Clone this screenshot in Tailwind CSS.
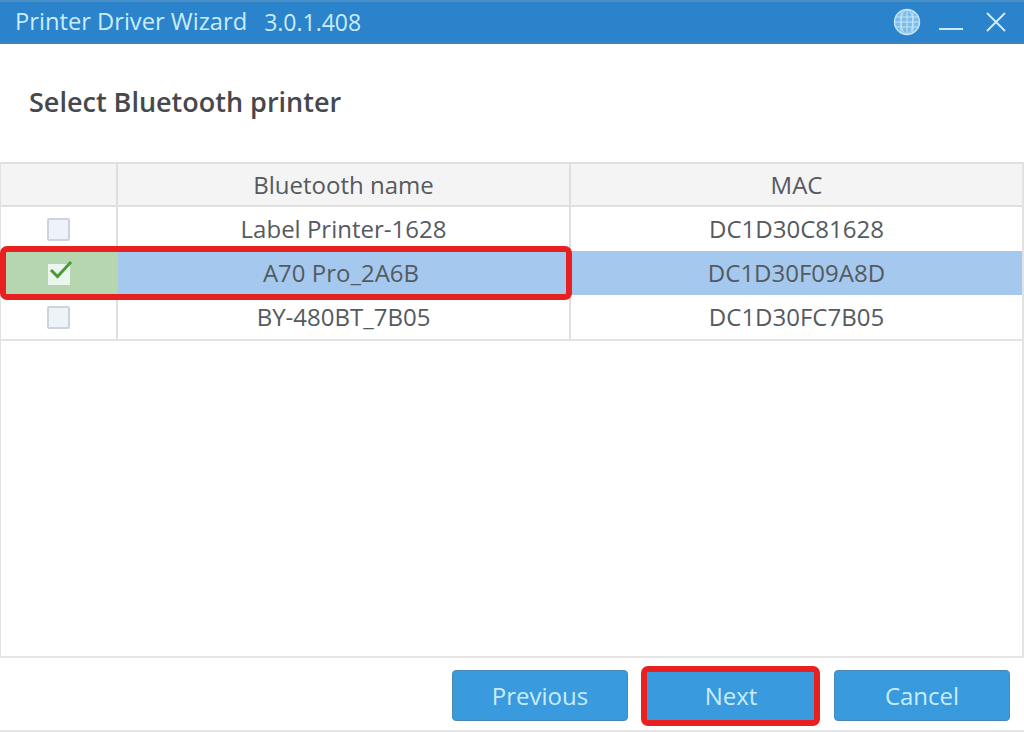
<!DOCTYPE html>
<html>
<head>
<meta charset="utf-8">
<script src="https://cdn.jsdelivr.net/npm/@tailwindcss/browser@4"></script>
</head>
<body class="m-0">
<div class="relative w-[1024px] h-[732px] overflow-hidden bg-white flex flex-col font-['Open_Sans','Noto_Sans',sans-serif] text-[#555a60]">
  <header class="h-[44px] shrink-0 bg-[#2a83cb] border-t-2 border-t-[#4a8fc6] border-b-2 border-b-[#3f86bf] flex items-center pl-[15px] text-[#c9ecfb] text-[23.7px]">
    <span>Printer Driver Wizard</span>
    <span class="ml-[17px] text-[23px]">3.0.1.408</span>
    <div class="ml-auto flex items-center pr-[18px]">
      <svg class="w-[28px] h-[28px]" viewBox="0 0 28 28" fill="#7fbce8" stroke="#c4e6f8" stroke-width="1">
        <circle cx="14" cy="14" r="12.5" stroke-width="1.4"/>
        <ellipse cx="14" cy="14" rx="6" ry="12.5" fill="none"/>
        <path d="M14 1.5V26.5M2.5 9H25.5M1.5 14H26.5M2.5 19H25.5M8 3V25M20 3V25" fill="none"/>
      </svg>
      <svg class="w-[24px] h-[4px] ml-[18px] mt-[14px]" viewBox="0 0 24 4"><path d="M0 2H24" stroke="#c9ecfb" stroke-width="2"/></svg>
      <svg class="w-[20px] h-[20px] ml-[23px]" viewBox="0 0 20 20"><path d="M1 1L19 19M19 1L1 19" stroke="#d3effc" stroke-width="1.8"/></svg>
    </div>
  </header>

  <h1 class="h-[118px] shrink-0 flex items-center pl-[29px] pb-[2px] text-[27px] font-semibold text-[#46484b]">Select Bluetooth printer</h1>

  <div class="grid grid-cols-[117px_453px_1fr] grid-rows-[45px_44px_44px_44px] text-[24px] border-l border-b-2 border-r-2 border-[#e2e2e2]">
    <div class="bg-[#f4f4f4] border-t-2 border-b-2 border-r-2 border-[#dfdfdf]"></div>
    <div class="bg-[#f4f4f4] border-t-2 border-b-2 border-r-2 border-[#dfdfdf] flex items-center justify-center">Bluetooth name</div>
    <div class="bg-[#f4f4f4] border-t-2 border-b-2 border-[#dfdfdf] flex items-center justify-center">MAC</div>

    <div class="border-r-2 border-[#dfdfdf] flex items-center justify-center"><div class="w-[23px] h-[23px] bg-[#eef3fa] border-2 border-[#ccd3dc] rounded-[2px]"></div></div>
    <div class="border-r-2 border-[#dfdfdf] flex items-center justify-center">Label Printer-1628</div>
    <div class="flex items-center justify-center">DC1D30C81628</div>

    <div class="bg-[#b5d6ae] flex items-center justify-center">
      <div class="relative w-[22px] h-[21px] bg-[#eaf6ee] mr-[1px] mt-[2px]">
        <svg class="absolute left-[1px] top-[-4px] w-[24px] h-[20px]" viewBox="0 0 24 20" fill="none"><path d="M2 10L8.5 16.5L22 2" stroke="#4a9a35" stroke-width="3"/></svg>
      </div>
    </div>
    <div class="bg-[#a5c9ee] flex items-center justify-center pr-[7px]">A70 Pro_2A6B</div>
    <div class="bg-[#a5c9ee] flex items-center justify-center">DC1D30F09A8D</div>

    <div class="border-r-2 border-[#dfdfdf] flex items-center justify-center"><div class="w-[23px] h-[23px] bg-[#eef3fa] border-2 border-[#ccd3dc] rounded-[2px]"></div></div>
    <div class="border-r-2 border-[#dfdfdf] flex items-center justify-center">BY-480BT_7B05</div>
    <div class="flex items-center justify-center">DC1D30FC7B05</div>
  </div>

  <div class="flex-1 border-l border-r-2 border-[#e4e4e4]"></div>

  <footer class="h-[76px] shrink-0 border-t-2 border-b-2 border-[#e6e6e6] flex items-center justify-end gap-[17px] pr-[14px] pt-[3px] text-[24px] text-[#c9ecfb]">
    <button class="w-[176px] h-[51px] pt-[1px] bg-[#3a9ade] border border-[#4a87b5] rounded-[4px]">Previous</button>
    <button class="w-[172px] h-[51px] pt-[1px] bg-[#3a9ade] rounded-[4px]">Next</button>
    <button class="w-[176px] h-[51px] pt-[1px] bg-[#3a9ade] border border-[#4a87b5] rounded-[4px]">Cancel</button>
  </footer>

  <div class="absolute left-0 top-[246px] w-[572px] h-[54px] border-[6px] border-[#e8201f] rounded-[7px]"></div>
  <div class="absolute left-[641px] top-[666px] w-[179px] h-[60px] border-[6px] border-[#e8201f] rounded-[7px]"></div>
</div>
</body>
</html>
